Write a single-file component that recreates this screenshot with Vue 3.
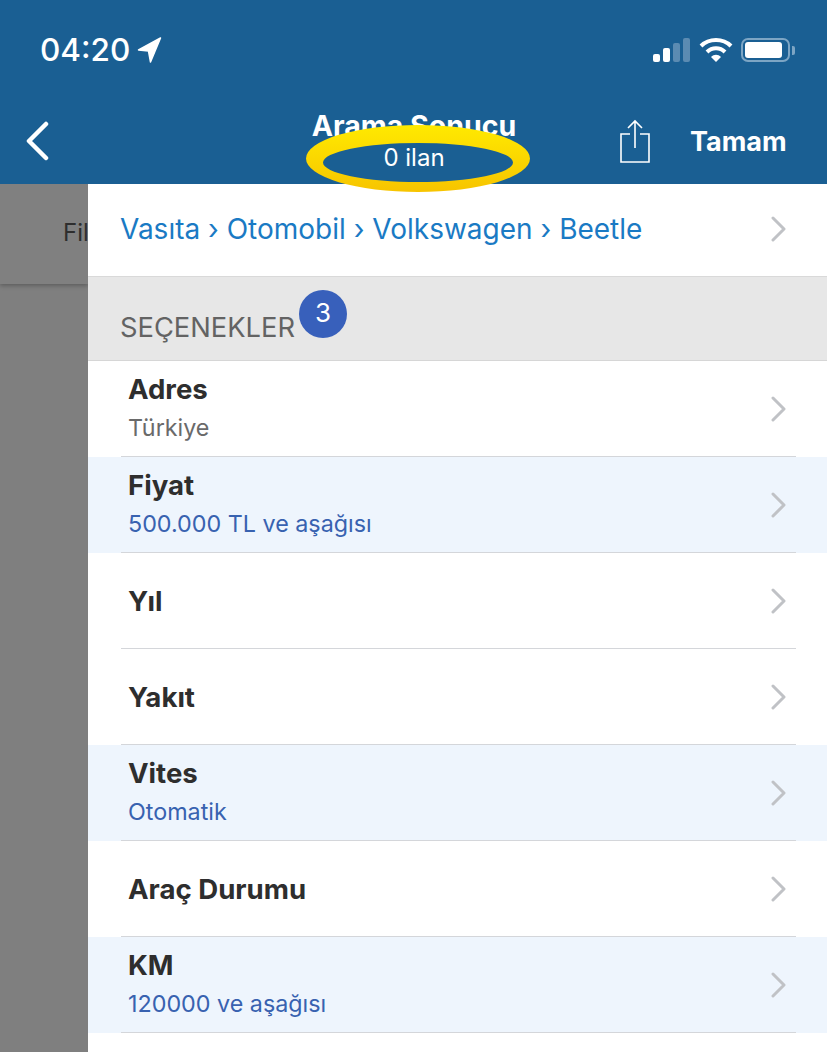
<template>
  <div class="page">
    <header class="header">
      <div class="status">
        <div class="time">
          04:20
          <svg class="loc" width="25" height="26" viewBox="0 0 24 26"><path d="M23 1 L1 13 L11 14 L13 25 Z" fill="#fff" stroke="#fff" stroke-width="1.5" stroke-linejoin="round"/></svg>
        </div>
        <div class="status-icons">
          <div class="bars">
            <span class="bar b1"></span>
            <span class="bar b2"></span>
            <span class="bar b3"></span>
            <span class="bar b4"></span>
          </div>
          <svg width="34" height="26" viewBox="0 0 34 26" fill="none" stroke="#fff" stroke-width="4">
            <path d="M2 9 C10 1 24 1 32 9"/>
            <path d="M8 15 C13 10 21 10 26 15"/>
            <path d="M17 25 L12 20 C15 17 19 17 22 20 Z" fill="#fff" stroke="none"/>
          </svg>
          <div class="battery"><span class="level"></span></div>
          <span class="nub"></span>
        </div>
      </div>
      <div class="nav">
        <svg class="back" width="26" height="40" viewBox="0 0 26 40" fill="none" stroke="#fff" stroke-width="4.5" stroke-linecap="round" stroke-linejoin="round"><path d="M22 3 L5 20 L22 37"/></svg>
        <div class="title">
          <div class="title-main">Arama Sonucu</div>
          <div class="title-sub">0 ilan</div>
        </div>
        <svg class="ring" width="224" height="67" viewBox="0 0 224 67">
          <defs>
            <linearGradient id="ringFill" x1="0" y1="0" x2="0" y2="1">
              <stop offset="0" stop-color="#ffea00"/>
              <stop offset="1" stop-color="#f7c400"/>
            </linearGradient>
          </defs>
          <path fill="url(#ringFill)" fill-rule="evenodd" d="M0 33.5 A112 33.5 0 1 1 224 33.5 A112 33.5 0 1 1 0 33.5 Z M17 37.5 A95 19.5 0 1 0 207 37.5 A95 19.5 0 1 0 17 37.5 Z"/>
        </svg>
        <svg class="share" width="30" height="44" viewBox="0 0 30 44" fill="none" stroke="#fff" stroke-width="1.6"><path d="M10 15 H1 V43 H29 V15 H20"/><path d="M15 29 V2 M8 9 L15 2 L22 9"/></svg>
        <div class="done">Tamam</div>
      </div>
    </header>

    <div class="body">
      <aside class="behind">
        <div class="filter-bar">Fil</div>
      </aside>
      <main class="panel">
        <div class="crumbs">
          <span>Vasıta › Otomobil › Volkswagen › Beetle</span>
          <svg class="chev" width="16" height="26" viewBox="0 0 16 26" fill="none" stroke="#c0c2c6" stroke-width="3" stroke-linecap="round" stroke-linejoin="round"><path d="M3 2 L14 13 L3 24"/></svg>
        </div>
        <div class="section">
          <span class="section-label">SEÇENEKLER</span>
          <span class="count">3</span>
        </div>
        <div
          v-for="row in rows"
          :key="row.name"
          :class="['row', row.active ? 'active' : '']"
        >
          <div class="row-text">
            <div class="row-name">{{ row.name }}</div>
            <div v-if="row.value" class="row-value">{{ row.value }}</div>
          </div>
          <svg class="chev" width="16" height="26" viewBox="0 0 16 26" fill="none" stroke="#c0c2c6" stroke-width="3" stroke-linecap="round" stroke-linejoin="round"><path d="M3 2 L14 13 L3 24"/></svg>
        </div>
      </main>
    </div>
  </div>
</template>

<script setup>
const rows = [
  { name: 'Adres', value: 'Türkiye' },
  { name: 'Fiyat', value: '500.000 TL ve aşağısı', active: true },
  { name: 'Yıl' },
  { name: 'Yakıt' },
  { name: 'Vites', value: 'Otomatik', active: true },
  { name: 'Araç Durumu' },
  { name: 'KM', value: '120000 ve aşağısı', active: true },
]
</script>

<style scoped>
.page {
  width: 827px;
  height: 1052px;
  overflow: hidden;
  display: flex;
  flex-direction: column;
  font-family: Inter, "Noto Sans", sans-serif;
  background: #7f7f7f;
}

.header {
  height: 184px;
  flex: none;
  background: #1a5f93;
  color: #fff;
}

.status {
  height: 100px;
  display: flex;
  justify-content: space-between;
  align-items: flex-start;
  padding: 32px 32px 0 40px;
  box-sizing: border-box;
}

.time {
  display: flex;
  align-items: center;
  gap: 7px;
  font-size: 31.5px;
  font-weight: 500;
  line-height: 36px;
}

.status-icons {
  display: flex;
  align-items: center;
  gap: 8px;
  height: 36px;
}

.bars {
  display: flex;
  align-items: flex-end;
  gap: 3px;
  margin-right: 1px;
}

.bar {
  width: 7px;
  border-radius: 2px;
  background: #fff;
}

.b1 { height: 8px; }
.b2 { height: 14px; }
.b3 { height: 19px; background: #5b8bb2; }
.b4 { height: 24px; background: #5b8bb2; }

.battery {
  width: 49px;
  height: 24px;
  box-sizing: border-box;
  border: 2px solid #7da5c4;
  border-radius: 7px;
  padding: 2px;
}

.level {
  display: block;
  width: 37px;
  height: 16px;
  background: #fff;
  border-radius: 3px;
}

.nub {
  width: 3px;
  height: 9px;
  margin-left: -6px;
  background: #7da5c4;
  border-radius: 0 2px 2px 0;
}

.nav {
  height: 84px;
  display: flex;
  align-items: flex-start;
  position: relative;
}

.back {
  margin: 21px 0 0 24px;
}

.title {
  position: absolute;
  left: 213px;
  width: 402px;
  top: 9px;
  text-align: center;
}

.title-main {
  font-size: 28.5px;
  font-weight: 700;
  line-height: 34px;
}

.title-sub {
  font-size: 24px;
  line-height: 30px;
}

.ring {
  position: absolute;
  left: 306px;
  top: 25px;
  z-index: 3;
}

.share {
  position: absolute;
  left: 620px;
  top: 19px;
}

.done {
  position: absolute;
  left: 690px;
  top: 25px;
  font-size: 27px;
  font-weight: 700;
  line-height: 34px;
}

.body {
  flex: 1;
  display: flex;
  min-height: 0;
}

.behind {
  width: 88px;
  flex: none;
  overflow: hidden;
}

.filter-bar {
  height: 100px;
  box-sizing: border-box;
  padding: 34px 0 0 63px;
  background: #808080;
  box-shadow: 0 2px 4px rgba(0, 0, 0, 0.25);
  font-size: 24px;
  line-height: 30px;
  color: #2e2e2e;
}

.panel {
  flex: 1;
  background: #fff;
}

.crumbs {
  height: 93px;
  box-sizing: border-box;
  display: flex;
  align-items: center;
  justify-content: space-between;
  padding: 0 41px 2px 32px;
  font-size: 28px;
  color: #1a7ac4;
  border-bottom: 1px solid #d9d9d9;
}

.section {
  height: 84px;
  box-sizing: border-box;
  background: #e7e7e7;
  border-bottom: 1px solid #d6d6d6;
  position: relative;
}

.section-label {
  position: absolute;
  left: 32px;
  top: 35px;
  font-size: 27.3px;
  line-height: 32px;
  color: #636363;
}

.count {
  position: absolute;
  left: 211px;
  top: 13px;
  width: 48px;
  height: 48px;
  border-radius: 50%;
  background: #3860bb;
  color: #fff;
  font-size: 26px;
  line-height: 46px;
  text-align: center;
}

.row {
  height: 96px;
  box-sizing: border-box;
  display: flex;
  align-items: center;
  justify-content: space-between;
  padding: 0 41px 0 40px;
  position: relative;
}

.row::after {
  content: "";
  position: absolute;
  left: 33px;
  right: 31px;
  bottom: 0;
  height: 1px;
  background: #d4d6da;
}

.row.active {
  background: #eef5fd;
}

.row-text {
  margin-top: -1px;
}

.row-name {
  font-size: 27.6px;
  font-weight: 700;
  line-height: 34px;
  color: #2e2e2e;
}

.row-value {
  font-size: 23.3px;
  line-height: 30px;
  margin-top: 7px;
  margin-bottom: 3px;
  color: #6a6a6a;
}

.row.active .row-value {
  color: #3862b0;
}
</style>

<style>
html, body {
  margin: 0;
  background: #7f7f7f;
}
</style>
